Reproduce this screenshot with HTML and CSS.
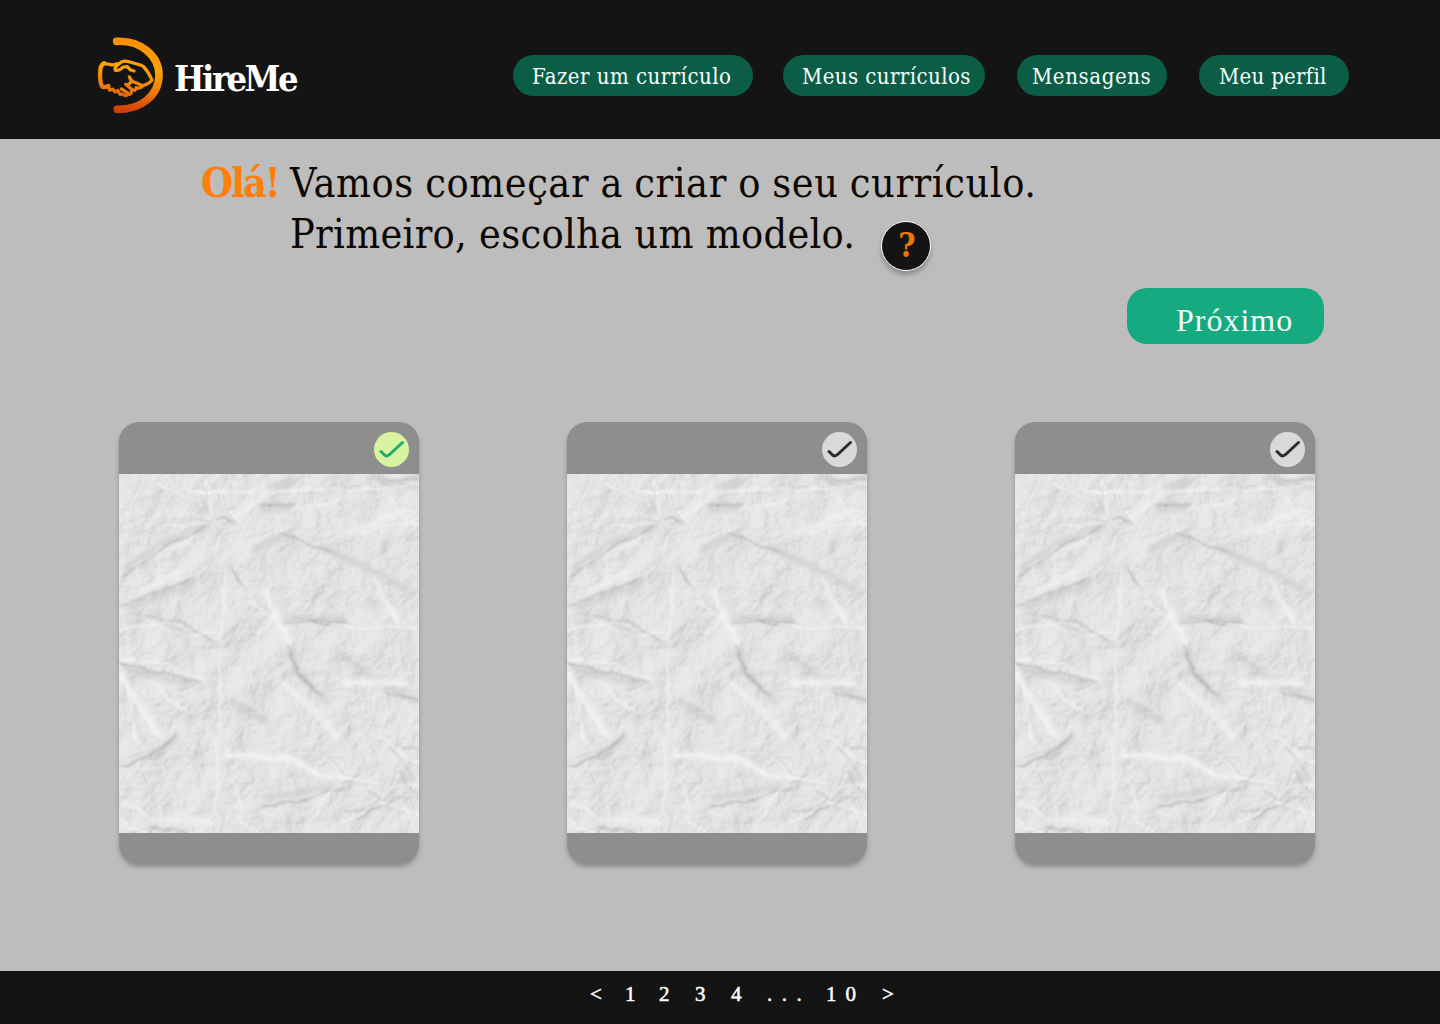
FILE: index.html
```html
<!DOCTYPE html>
<html lang="pt-BR">
<head>
<meta charset="utf-8">
<title>HireMe</title>
<link rel="stylesheet" href="styles.css">
</head>
<body>
<svg class="defs" width="0" height="0" aria-hidden="true">
  <defs>
    <filter id="grain" x="0" y="0" width="100%" height="100%">
      <feTurbulence type="fractalNoise" baseFrequency="0.025 0.025" numOctaves="7" seed="8" result="n"/>
      <feDiffuseLighting in="n" surfaceScale="6.5" diffuseConstant="1" lighting-color="#fff"><feDistantLight azimuth="215" elevation="58"/></feDiffuseLighting>
    </filter>
    <filter id="soft" x="-10%" y="-10%" width="120%" height="120%">
      <feTurbulence type="fractalNoise" baseFrequency="0.05" numOctaves="2" seed="3" result="t"/>
      <feDisplacementMap in="SourceGraphic" in2="t" scale="9" xChannelSelector="R" yChannelSelector="G" result="d"/>
      <feGaussianBlur in="d" stdDeviation="0.8"/>
    </filter>
    <filter id="wide" x="-10%" y="-10%" width="120%" height="120%"><feGaussianBlur stdDeviation="2.5"/></filter>
    <symbol id="paper" viewBox="0 0 300 359">
      <rect width="300" height="359" fill="#dedede"/>
      <rect width="300" height="359" filter="url(#grain)" opacity=".38"/>
      <g fill="none" filter="url(#wide)" stroke-width="6">
        <path stroke="#c2c2c2" opacity=".5" d="M4 97Q40 65 90 53M134 76L171 58M171 173L178 199 208 228M218 178L258 207 298 228M8 135L75 108M164 145H225M45 150L70 164M4 194L84 213M144 325L215 312M200 72L240 90 288 115M240 345L290 300M140 36L175 33M150 12L175 8M262 8L298 12M60 262L30 285M110 225L150 250"/>
        <path stroke="#f4f4f4" opacity=".8" d="M161 206L198 239 221 266M224 209H288M108 281L171 284 198 299M146 116L171 170M1 199L41 263M114 44L134 30M260 120L281 150M40 346L90 348M225 60L290 35M58 75L75 60M20 120L60 96"/>
      </g>
      <g fill="none" filter="url(#soft)" stroke-linecap="round">
        <path stroke="#9c9c9c" stroke-width="1.6" opacity=".52" d="M91 51Q45 68 4 105M1 133L71 105M77 50L104 44 118 51M139 33L174 31M161 58L191 70 218 81M164 149L204 146 228 149M111 95L128 113M27 144H56M58 144L96 170M258 4L298 8M208 15L240 13M171 173L178 199 204 223M268 218L298 226M1 189L84 210M1 291L31 281 58 259M144 333L191 324 224 314M204 279L224 300M238 344L262 332M284 273H299M8 359L30 354 70 358M190 148L210 151"/>
        <path stroke="#f6f6f6" stroke-width="1.8" opacity=".72" d="M107 94L103 150 101 220 98 300 97 359M71 18H109L171 16 264 14 299 12M68 40L98 46M38 53L91 49M111 36L124 52M124 48L134 31 150 16M134 68L171 52M268 21L288 48 299 51M146 116L154 140 171 170M224 152L299 155M254 103L281 150M1 158L35 151 70 162 96 158M1 186L41 188 84 206M1 199L21 235 41 263M8 216L18 266M28 206L68 238M58 219L91 209M108 281L171 284 198 299M198 301L224 303M204 279L224 303 258 309M188 353L214 316M111 306L124 333M14 293L44 294M224 209H288M299 238L280 268M260 262L299 290M284 293L262 326 299 340M246 330L282 308 299 310M224 349L260 330 280 300M284 330L296 358M1 326L42 350M64 340L96 352M2 345L25 359M121 346L140 359M174 35L210 30 230 18M130 126L155 144 135 164M40 7L68 25M87 7L94 35M112 6L120 20M240 60L299 45"/>
        <path stroke="#a0a0a0" stroke-width="1.2" opacity=".55" d="M270 272L292 300M265 332L290 318M248 318L275 328M281 298L299 322M225 340L245 336M256 6L272 12"/>
      </g>
    </symbol>
    <symbol id="tick" viewBox="0 0 35 35"><path d="M7 19.5L10.8 23.2Q13.2 24.8 15.6 22.5L28.5 10.5" fill="none" stroke="currentColor" stroke-width="3" stroke-linecap="round" stroke-linejoin="round"/></symbol>
  </defs>
</svg>
<header class="topbar">
  <div class="brand">
    <svg class="logo" viewBox="48 48 210 240" role="img" aria-label="HireMe">
      <defs><linearGradient id="flame" gradientUnits="userSpaceOnUse" x1="175" y1="50" x2="145" y2="280"><stop offset="0" stop-color="#f98b00"/><stop offset=".4" stop-color="#fca404"/><stop offset=".7" stop-color="#ee7808"/><stop offset="1" stop-color="#cf3908"/></linearGradient></defs>
      <g fill="none" stroke="url(#flame)" stroke-linecap="round" stroke-linejoin="round">
        <path stroke-width="23" d="M110 64C182 60 237 108 237 165C237 225 184 270 112 268"/>
        <path stroke-width="13" d="M72 130Q60 134 60 164Q61 196 68 201Q77 202 85 198"/>
        <path stroke-width="9.5" d="M72 130L92 134Q101 136 111 131M106 151Q102 144 112 136L124 126Q133 121 147 125L181 135L190 139Q208 159 216 181Q205 194 189 197M106 151Q118 154 129 141L142 140L150 149L162 153M85 198L89 211L98 207L105 216L113 211L120 223L128 222Q136 231 145 223M124 207Q137 214 148 223Q156 222 154 211M137 193L157 209Q169 215 168 203M148 171Q157 186 164 187L189 197Q181 207 168 203M148 171L155 186L145 193"/>
      </g>
    </svg>
    <span class="brand-name">HireMe</span>
  </div>
  <nav class="menu">
    <a class="pill p1">Fazer um currículo</a>
    <a class="pill p2">Meus currículos</a>
    <a class="pill p3">Mensagens</a>
    <a class="pill p4">Meu perfil</a>
  </nav>
</header>
<main>
  <section class="intro">
    <strong class="hello">Olá!</strong>
    <h1><span class="l1">Vamos começar a criar o seu currículo.</span><br><span class="l2">Primeiro, escolha um modelo.</span></h1>
    <button class="help">?</button>
  </section>
  <div class="actions"><button class="next">Próximo</button></div>
  <section class="cards">
    <article class="card"><div class="card-top"><span class="check on"><svg><use href="#tick"/></svg></span></div><svg class="paper"><use href="#paper"/></svg></article>
    <article class="card"><div class="card-top"><span class="check"><svg><use href="#tick"/></svg></span></div><svg class="paper"><use href="#paper"/></svg></article>
    <article class="card"><div class="card-top"><span class="check"><svg><use href="#tick"/></svg></span></div><svg class="paper"><use href="#paper"/></svg></article>
  </section>
</main>
<footer class="pager"><span class="prev">&lt;</span><span class="one">1</span><span>2</span><span>3</span><span>4</span><span class="dots">...</span><span class="ten">10</span><span>&gt;</span></footer>
</body>
</html>
```
FILE: styles.css
```css
* { box-sizing: border-box; }
body { margin: 0; width: 1440px; height: 1024px; display: flex; flex-direction: column; background: #bdbdbd; font-family: "DejaVu Serif Condensed", "DejaVu Serif", serif; font-stretch: condensed; overflow: hidden; }
.defs { display: block; position: absolute; }
button { border: 0; padding: 0; font: inherit; }
.topbar { height: 139px; flex: none; background: #141414; display: flex; justify-content: space-between; padding: 0 91px 0 96px; }
.brand { display: flex; padding-top: 36px; gap: 8px; }
.logo { width: 70px; height: 80px; }
.brand-name { color: #fff; font-size: 36px; font-weight: 700; line-height: 84px; letter-spacing: -2.5px; white-space: nowrap; }
.menu { display: flex; padding-top: 55px; }
.pill { height: 41px; border-radius: 21px; background: #0c5d46; color: #f4fffb; font-size: 22px; line-height: 43px; white-space: nowrap; }
.p1 { width: 240px; padding-left: 19px; margin-right: 30px; letter-spacing: .47px; }
.p2 { width: 202px; padding-left: 19px; margin-right: 32px; letter-spacing: .42px; }
.p3 { width: 150px; padding-left: 15px; margin-right: 32px; letter-spacing: .6px; }
.p4 { width: 150px; padding-left: 20px; letter-spacing: .28px; }
main { height: 832px; flex: none; }
.intro { height: 149px; display: flex; padding: 19px 0 0 201px; }
.hello { width: 89px; color: #ff7f0a; font-size: 41px; line-height: 51px; letter-spacing: -2.1px; white-space: nowrap; }
h1 { margin: 0; width: 591px; font-size: 41px; font-weight: 400; line-height: 51px; color: #0d0700; white-space: nowrap; }
.l1 { letter-spacing: .58px; word-spacing: -1px; }
.l2 { letter-spacing: .3px; }
.help { width: 50px; height: 50px; margin-top: 63px; border: 1.5px solid #fff; border-radius: 50%; background: #141414; color: #ed7609; font-size: 33px; font-weight: 700; line-height: 46px; padding-left: 2px; box-shadow: 0 4px 4px rgba(0,0,0,.25); }
.actions { display: flex; justify-content: flex-end; padding-right: 116px; height: 134px; }
.next { width: 197px; height: 56px; border-radius: 20px; background: #15aa7f; color: #f4fffb; font: 32px/60px "Liberation Serif", serif; padding: 2px 0 0 49px; text-align: left; letter-spacing: 1px; }
.cards { display: flex; gap: 148px; padding-left: 119px; }
.card { width: 300px; height: 441px; border-radius: 20px; background: #8e8e8e; box-shadow: 0 4px 4px rgba(0,0,0,.25); }
.card-top { height: 52px; padding: 10px 10px 0 0; display: flex; justify-content: flex-end; }
.check { width: 35px; height: 35px; border-radius: 50%; background: #d9d9d9; color: #2d2d2d; }
.check.on { background: #d8f3a2; color: #1dab70; }
.check svg { display: block; width: 35px; height: 35px; }
.paper { display: block; width: 300px; height: 359px; }
.pager { height: 53px; background: #141414; color: #fff; display: flex; padding-left: 590px; font: 21px/47px "Liberation Serif", serif; -webkit-text-stroke: .5px #fff; white-space: nowrap; }
.pager span { width: 36px; }
.pager .prev { width: 35px; }
.pager .one { width: 34px; }
.pager .dots { width: 59px; letter-spacing: 9.5px; }
.pager .ten { width: 56px; letter-spacing: 9px; }
```
